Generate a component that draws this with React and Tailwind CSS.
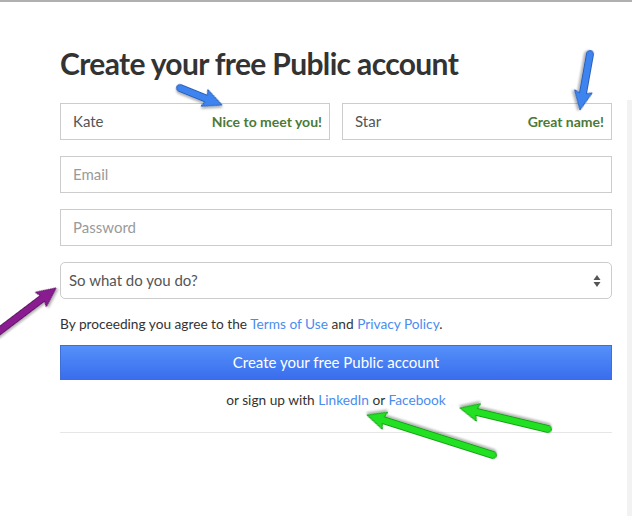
import React from "react";

function Arrow({ x1, y1, x2, y2, fill, stroke }) {
  const dx = x2 - x1;
  const dy = y2 - y1;
  const len = Math.sqrt(dx * dx + dy * dy);
  const angle = (Math.atan2(dy, dx) * 180) / Math.PI;
  const head = 17;
  return (
    <g transform={`translate(${x1} ${y1}) rotate(${angle})`} filter="url(#shadow)">
      <path
        d={`M0 -3.5 L${len - head} -3.5 L${len - head - 2} -9 L${len} 0 L${len - head - 2} 9 L${len - head} 3.5 L0 3.5 A3.5 3.5 0 0 1 0 -3.5 Z`}
        fill={fill}
        stroke={stroke}
        strokeWidth="1"
        strokeLinejoin="round"
      />
    </g>
  );
}

function Field({ placeholder, value, hint }) {
  return (
    <div className="relative flex h-[37px] flex-1 items-center border border-[#cccccc] bg-white pl-[12px] pr-[7px]">
      {value ? (
        <span className="text-[15px] text-[#555555]">{value}</span>
      ) : (
        <span className="text-[15px] text-[#9a9a9a]">{placeholder}</span>
      )}
      {hint && (
        <span className="ml-auto text-[14px] font-bold text-[#4b7a36]">{hint}</span>
      )}
    </div>
  );
}

export default function App() {
  return (
    <div
      className="relative h-[516px] w-[632px] overflow-hidden bg-white"
      style={{ fontFamily: "Lato, 'Open Sans', sans-serif" }}
    >
      <div className="h-[2px] bg-[#b0b0b0]" />
      <div className="absolute right-0 top-[100px] h-[416px] w-[5px] bg-[#f2f2f2]" />

      <div className="w-[552px] ml-[60px] pt-[43px]">
        <h1 className="text-[30px] font-bold leading-[36px] tracking-[-0.65px] text-[#333333]">
          Create your free Public account
        </h1>

        <div className="mt-[22px] flex gap-[12px]">
          <Field value="Kate" hint="Nice to meet you!" />
          <Field value="Star" hint="Great name!" />
        </div>

        <div className="mt-[16px] flex">
          <Field placeholder="Email" />
        </div>
        <div className="mt-[16px] flex">
          <Field placeholder="Password" />
        </div>

        <div className="mt-[16px] flex h-[37px] items-center rounded-[5px] border border-[#cccccc] bg-white pl-[8px] pr-[10px]">
          <span className="text-[15px] text-[#555555]">So what do you do?</span>
          <svg className="ml-auto" width="8" height="14" viewBox="0 0 8 14">
            <path d="M4 1 L7.5 6 L0.5 6 Z" fill="#555" />
            <path d="M4 13 L7.5 8 L0.5 8 Z" fill="#555" />
          </svg>
        </div>

        <p className="mt-[15px] text-[13.7px] leading-[20px] text-[#333333]">
          By proceeding you agree to the{" "}
          <a className="text-[#4a8cf0]">Terms of Use</a> and{" "}
          <a className="text-[#4a8cf0]">Privacy Policy</a>.
        </p>

        <button className="mt-[11px] flex h-[35px] w-full items-center justify-center border border-[#3f6fd6] bg-gradient-to-b from-[#5590fa] to-[#3a6ded] text-[15px] text-white">
          Create your free Public account
        </button>

        <p className="mt-[10px] text-center text-[13.7px] leading-[20px] text-[#333333]">
          or sign up with <a className="text-[#4a8cf0]">LinkedIn</a> or{" "}
          <a className="text-[#4a8cf0]">Facebook</a>
        </p>

        <div className="mt-[22px] h-px bg-[#e6e6e6]" />
      </div>

      <svg className="pointer-events-none absolute left-0 top-0" width="632" height="516">
        <defs>
          <filter id="shadow" x="-20%" y="-50%" width="140%" height="200%">
            <feDropShadow dx="1" dy="2" stdDeviation="1.2" floodColor="#000" floodOpacity="0.3" />
          </filter>
        </defs>
        <Arrow x1={180} y1={88} x2={222} y2={105} fill="#3d84f0" stroke="#2a5fb5" />
        <Arrow x1={590} y1={54} x2={580} y2={110} fill="#3d84f0" stroke="#2a5fb5" />
        <Arrow x1={-10} y1={338} x2={56} y2={288} fill="#8a1d92" stroke="#5e1266" />
        <Arrow x1={493} y1={455} x2={367} y2={415} fill="#22e022" stroke="#16a016" />
        <Arrow x1={548} y1={429} x2={460} y2={408} fill="#22e022" stroke="#16a016" />
      </svg>
    </div>
  );
}
